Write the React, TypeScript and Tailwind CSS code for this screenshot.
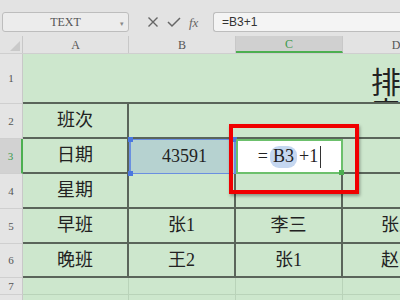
import React from "react";

const serif = { fontFamily: '"Liberation Serif", "Noto Sans CJK SC", serif' };

const rowH = [50, 35, 35, 35, 35, 34, 17, 40];

function RowHead({ n, h, active }: { n: number; h: number; active?: boolean }) {
  return (
    <div
      className={
        "shrink-0 flex items-center justify-center text-[11px] border-b border-[#cfcfcf] " +
        (active ? "bg-[#d2d2d2] text-[#3c9a4c] border-r-2 border-r-[#4caf50]" : "bg-[#e4e4e4] text-[#555] border-r border-r-[#c8c8c8]")
      }
      style={{ height: h, ...serif }}
    >
      {n}
    </div>
  );
}

function Cell({ children, cls = "" }: { children?: React.ReactNode; cls?: string }) {
  return (
    <div className={"flex items-center justify-center text-[18px] text-[#222] whitespace-nowrap " + cls} style={serif}>
      {children}
    </div>
  );
}

export default function App() {
  return (
    <div className="w-[400px] h-[300px] overflow-hidden bg-[#e3e3e3] relative select-none">
      {/* toolbar */}
      <div className="h-[36px] flex items-start pt-[12px]">
        <div className="shrink-0 ml-[2px] w-[127px] h-[20px] rounded-[3px] border border-[#bdbdbd] bg-[#ececec] flex items-center relative">
          <span className="flex-1 text-center text-[12px] text-[#555]" style={serif}>TEXT</span>
          <span className="absolute right-[4px] top-[6px] text-[7px] text-[#888]">▾</span>
        </div>
        <div className="shrink-0 w-[84px] flex items-center h-[20px] pl-[18px] gap-[8px] text-[#666]">
          <svg width="12" height="12" viewBox="0 0 12 12">
            <path d="M1.5 1.5 L10.5 10.5 M10.5 1.5 L1.5 10.5" stroke="#666" strokeWidth="1.4" fill="none" />
          </svg>
          <svg width="14" height="12" viewBox="0 0 14 12">
            <path d="M1 6 L5 10 L13 2" stroke="#666" strokeWidth="1.5" fill="none" />
          </svg>
          <span className="italic text-[13px] text-[#666] leading-none" style={serif}>fx</span>
        </div>
        <div className="flex-1 min-w-0 h-[20px] rounded-l-[3px] border border-r-0 border-[#bdbdbd] bg-[#f4f4f4] flex items-center pl-[8px] text-[12px] text-[#333]" style={{ fontFamily: '"Liberation Sans", sans-serif' }}>
          =B3+1
        </div>
      </div>

      {/* column header */}
      <div className="flex h-[18px] border-b border-[#cfcfcf]">
        <div className="shrink-0 w-[23px] relative border-r border-[#c8c8c8]">
          <svg width="10" height="10" viewBox="0 0 10 10" className="absolute left-[10px] top-[5px]">
            <path d="M10 0 L10 10 L0 10 Z" fill="#c9c9c9" />
          </svg>
        </div>
        {["A", "B", "C", "D"].map((c, i) => (
          <div
            key={c}
            className={
              "shrink-0 flex items-center justify-center text-[12px] border-r border-[#c8c8c8] " +
              (i === 0 ? "w-[106px] " : "w-[107px] ") +
              (c === "C" ? "bg-[#d0d0d0] text-[#3c9a4c] border-b-2 border-b-[#4caf50]" : "text-[#555]")
            }
            style={serif}
          >
            {c}
          </div>
        ))}
      </div>

      {/* body */}
      <div className="flex">
        <div className="shrink-0 w-[23px] flex flex-col">
          {rowH.map((h, i) => (
            <RowHead key={i} n={i + 1} h={h} active={i === 2} />
          ))}
        </div>
        <div className="shrink-0 w-[427px] bg-[#cde7cd] grid grid-cols-[106px_107px_107px_107px] grid-rows-[50px_35px_35px_35px_35px_34px_17px_40px] relative">
          {/* row 1 merged */}
          <div className="col-span-4 border-b-2 border-[#5a655a] relative overflow-hidden">
            <span className="absolute left-[348px] top-[11px] text-[30px] leading-none text-[#222]" style={{ fontFamily: '"Noto Sans CJK SC", sans-serif' }}>
              排班表
            </span>
          </div>
          {/* row 2 */}
          <Cell cls="border-r-2 border-b-2 border-[#5a655a]">班次</Cell>
          <Cell cls="col-span-3 border-b-2 border-[#5a655a]"></Cell>
          {/* row 3 */}
          <Cell cls="border-r-2 border-b-2 border-[#5a655a]">日期</Cell>
          <Cell cls="bg-[#b6d2d0] border-y border-x-2 border-[#6a8fe0] relative">
            <span className="pl-[4px]">43591</span>
            <span className="absolute -left-[3px] -top-[3px] w-[5px] h-[5px] bg-[#4a78e0]" />
            <span className="absolute -left-[3px] -bottom-[3px] w-[5px] h-[5px] bg-[#4a78e0]" />
            <span className="absolute -right-[3px] -top-[3px] w-[5px] h-[5px] bg-[#4a78e0]" />
          </Cell>
          <Cell cls="bg-white border-2 border-[#6cc06c] relative">
            <span className="mr-[2px]">=</span>
            <span className="bg-[#c5d7f0] rounded-[9px] px-[3px] h-[22px] flex items-center">B3</span>
            <span className="ml-[2px]">+1</span>
            <span className="ml-[2px] w-[1px] h-[22px] bg-[#333]" />
            <span className="absolute -right-[3px] -bottom-[3px] w-[5px] h-[5px] bg-[#4caf50]" />
          </Cell>
          <Cell cls="border-b-2 border-[#5a655a]"></Cell>
          {/* row 4 */}
          <Cell cls="border-r-2 border-b-2 border-[#5a655a]">星期</Cell>
          <Cell cls="border-r-2 border-b-2 border-[#5a655a]"></Cell>
          <Cell cls="border-r-2 border-b-2 border-[#5a655a]"></Cell>
          <Cell cls="border-b-2 border-[#5a655a]"></Cell>
          {/* row 5 */}
          <Cell cls="border-r-2 border-b-2 border-[#5a655a]">早班</Cell>
          <Cell cls="border-r-2 border-b-2 border-[#5a655a]">张1</Cell>
          <Cell cls="border-r-2 border-b-2 border-[#5a655a]">李三</Cell>
          <Cell cls="border-b-2 border-[#5a655a] justify-start pl-[38px]">张三</Cell>
          {/* row 6 */}
          <Cell cls="border-r-2 border-b-2 border-[#5a655a]">晚班</Cell>
          <Cell cls="border-r-2 border-b-2 border-[#5a655a]">王2</Cell>
          <Cell cls="border-r-2 border-b-2 border-[#5a655a]">张1</Cell>
          <Cell cls="border-b-2 border-[#5a655a] justify-start pl-[38px]">赵四</Cell>
          {/* row 7 */}
          <div className="border-r border-b border-[#b9d3b9]" />
          <div className="border-r border-b border-[#b9d3b9]" />
          <div className="border-r border-b border-[#b9d3b9]" />
          <div className="border-b border-[#b9d3b9]" />
          {/* row 8 */}
          <div className="border-r border-[#b9d3b9]" />
          <div className="border-r border-[#b9d3b9]" />
          <div className="border-r border-[#b9d3b9]" />
          <div />

          {/* red annotation box */}
          <div className="absolute left-[206px] top-[70px] w-[130px] h-[70px] border-[4px] border-[#f00000] shadow-[1px_2px_3px_rgba(0,0,0,0.35)] pointer-events-none" />
        </div>
      </div>
    </div>
  );
}
